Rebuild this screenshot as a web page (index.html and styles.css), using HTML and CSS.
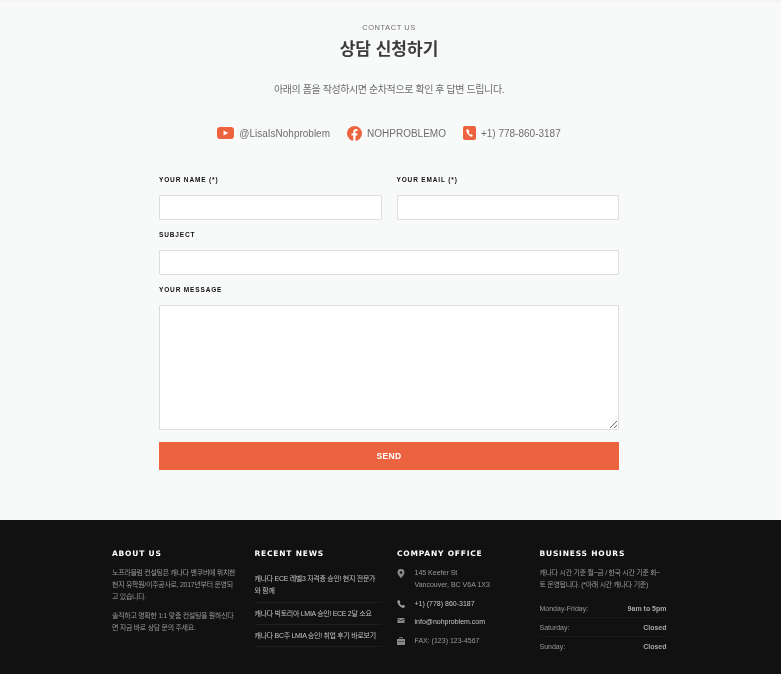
FILE: index.html
```html
<!DOCTYPE html>
<html lang="ko">
<head>
  <meta charset="UTF-8">
  <title>Contact Us</title>
  <link rel="stylesheet" href="styles.css">
</head>
<body>
  <section class="contact">
    <div class="contact-inner">
      <p class="eyebrow">CONTACT US</p>
      <h1>상담 신청하기</h1>
      <p class="intro">아래의 폼을 작성하시면 순차적으로 확인 후 답변 드립니다.</p>

      <div class="channels">
        <div class="channel">
          <svg width="17" height="12" viewBox="0 0 16 12" preserveAspectRatio="none"><rect width="16" height="12" rx="3" fill="#ec643f"/><path d="M6.2 3.5v5L10.6 6z" fill="#fff"/></svg>
          <span>@LisaIsNohproblem</span>
        </div>
        <div class="channel">
          <svg width="15" height="15" viewBox="0 0 15 15"><circle cx="7.5" cy="7.5" r="7.5" fill="#ec643f"/><path d="M6.3 15V9.6H4.5V7.5h1.8V5.9c0-1.8 1.1-2.8 2.7-2.8.8 0 1.5.1 1.5.1v1.8h-.9c-.9 0-1.1.5-1.1 1.1v1.4h2l-.3 2.1H8.500V15z" fill="#fff"/></svg>
          <span>NOHPROBLEMO</span>
        </div>
        <div class="channel">
          <svg width="13" height="14" viewBox="0 0 13 14"><rect width="13" height="14" rx="2" fill="#ec643f"/><path d="M4.700 3.200l-1.300.4c-.3 1.200.2 2.900 1.300 4.300s2.500 2.500 3.900 2.800l1.100-.9c.2-.2.2-.4 0-.6L8.400 8.200c-.2-.1-.4-.1-.5.1l-.5.5c-.7-.3-1.500-1.300-1.800-2.100l.6-.4c.2-.1.200-.3.200-.5l-1.100-2.400c-.1-.2-.4-.3-.6-.2z" fill="#fff"/></svg>
          <span>+1) 778-860-3187</span>
        </div>
      </div>

      <form class="contact-form">
        <div class="form-row">
          <div class="form-group">
            <label for="name">YOUR NAME (*)</label>
            <input type="text" id="name">
          </div>
          <div class="form-group">
            <label for="email">YOUR EMAIL (*)</label>
            <input type="text" id="email">
          </div>
        </div>
        <div class="form-group">
          <label for="subject">SUBJECT</label>
          <input type="text" id="subject">
        </div>
        <div class="form-group">
          <label for="message">YOUR MESSAGE</label>
          <textarea id="message"></textarea>
        </div>
        <button type="button">SEND</button>
      </form>
    </div>
  </section>

  <footer class="footer">
    <div class="footer-inner">
      <div class="col">
        <h4>ABOUT US</h4>
        <p class="about">노프라블럼 컨설팅은 캐나다 밴쿠버에 위치한 현지 유학원/이주공사로, 2017년부터 운영되고 있습니다.</p>
        <p class="about">솔직하고 명확한 1:1 맞춤 컨설팅을 원하신다면 지금 바로 상담 문의 주세요.</p>
      </div>
      <div class="col">
        <h4>RECENT NEWS</h4>
        <ul class="news">
          <li>캐나다 ECE 레벨3 자격증 승인! 현지 전문가와 함께</li>
          <li>캐나다 빅토리아 LMIA 승인! ECE 2달 소요</li>
          <li>캐나다 BC주 LMIA 승인! 취업 후기 바로보기</li>
        </ul>
      </div>
      <div class="col">
        <h4>COMPANY OFFICE</h4>
        <ul class="office">
          <li>
            <svg width="7" height="9" viewBox="0 0 7 9"><path fill-rule="evenodd" d="M3.500 0A3.400 3.400 0 0 0 0 3.400C0 5.500 3.500 9 3.500 9S7 5.500 7 3.400A3.400 3.400 0 0 0 3.500 0zm0 2.200a1.300 1.300 0 1 1 0 2.600 1.300 1.300 0 0 1 0-2.600z" fill="#8a8a8a"/></svg>
            <span>145 Keefer St<br>Vancouver, BC V6A 1X3</span>
          </li>
          <li>
            <svg width="8" height="8" viewBox="0 0 8 8"><path d="M1.800.2L.4.800C.1 2.400 1 4.300 2.300 5.700S5.600 8 7.200 7.700l.7-1.400c.1-.2 0-.4-.1-.5L6.200 4.900c-.2-.1-.4 0-.5.100l-.6.700C4.200 5.300 2.900 4 2.500 3l.7-.6c.2-.1.200-.3.100-.5L2.300.3C2.200.1 2 .1 1.800.200z" fill="#a0a0a0"/></svg>
            <span class="bright">+1) (778) 860-3187</span>
          </li>
          <li>
            <svg width="7" height="5" viewBox="0 0 7 5"><rect width="7" height="5" rx=".6" fill="#8a8a8a"/><path d="M.4.900l3.100 2 3.100-2" fill="none" stroke="#111" stroke-width=".7"/></svg>
            <span class="bright">info@nohproblem.com</span>
          </li>
          <li>
            <svg width="8" height="8" viewBox="0 0 8 8"><path fill-rule="evenodd" d="M2.500 0h3v2H8v6H0V2h2.500zm.6.700v1.300h1.800V.700zM1 4v.6h6V4z" fill="#8a8a8a"/></svg>
            <span>FAX: (123) 123-4567</span>
          </li>
        </ul>
      </div>
      <div class="col">
        <h4>BUSINESS HOURS</h4>
        <p class="about">캐나다 시간 기준 월~금 / 한국 시간 기준 화~토 운영됩니다. (*아래 시간 캐나다 기준)</p>
        <ul class="hours">
          <li><span>Monday-Friday:</span><strong>9am to 5pm</strong></li>
          <li><span>Saturday:</span><strong>Closed</strong></li>
          <li><span>Sunday:</span><strong>Closed</strong></li>
        </ul>
      </div>
    </div>
  </footer>
</body>
</html>
```

FILE: styles.css
```css
* {
  box-sizing: border-box;
}
body {
  margin: 0;
  height: 674px;
  overflow: hidden;
  font-family: "Liberation Sans", "Noto Sans CJK KR", sans-serif;
  background-color: #f8f9f9;
}
p, h1, h4, ul {
  margin: 0;
  padding: 0;
}
ul {
  list-style: none;
}

.contact {
  height: 520px;
  padding: 23px 3px 0 0;
  text-align: center;
  background: linear-gradient(#f1f1f1, #f8f9f9 3px);
}
.contact-inner, .footer-inner {
  will-change: transform;
}
.eyebrow {
  font-size: 7.500px;
  line-height: 10px;
  letter-spacing: .55px;
  color: #6e6e6e;
}
h1 {
  margin-top: 5px;
  font-size: 17px;
  line-height: 24px;
  font-weight: bold;
  color: #3c3c3c;
}
.intro {
  margin-top: 20px;
  font-size: 10px;
  line-height: 16px;
  letter-spacing: -.4px;
  color: #6e6e6e;
}
.channels {
  display: flex;
  justify-content: center;
  align-items: center;
  gap: 17px;
  margin-top: 27px;
  height: 16px;
  font-size: 10px;
  color: #6e6e6e;
}
.channel {
  display: flex;
  align-items: center;
  gap: 5px;
}

.contact-form {
  width: 460px;
  margin: 34px auto 0;
  text-align: left;
}
.form-row {
  display: flex;
  gap: 15px;
}
.form-row .form-group {
  flex: 1;
}
label {
  display: block;
  height: 10px;
  margin-bottom: 10px;
  font-size: 6.500px;
  line-height: 10px;
  font-weight: bold;
  letter-spacing: .85px;
  color: #111;
}
input, textarea {
  display: block;
  width: 100%;
  border: 1px solid #ddd;
  border-radius: 1px;
  background-color: #fff;
  outline: none;
}
input {
  height: 25px;
  margin-bottom: 10px;
}
textarea {
  height: 125px;
  margin-bottom: 12px;
  resize: vertical;
}
button {
  display: block;
  width: 100%;
  height: 28px;
  padding: 0;
  border: none;
  background-color: #ec643f;
  color: #fff;
  font-family: inherit;
  font-size: 8.500px;
  font-weight: bold;
  letter-spacing: .3px;
}

.footer {
  height: 154px;
  padding: 29px 3px 0 0;
  background-color: #111;
  color: #999;
  font-size: 7px;
}
.footer-inner {
  display: grid;
  grid-template-columns: repeat(4, 127px);
  gap: 15.500px;
  width: 554px;
  margin: 0 auto;
}
h4 {
  height: 10px;
  margin-bottom: 8px;
  font-family: "DejaVu Sans", sans-serif;
  font-size: 7.500px;
  line-height: 10px;
  font-weight: bold;
  letter-spacing: .8px;
  color: #fff;
}
.about {
  width: 124px;
  line-height: 12px;
  margin-bottom: 7px;
  letter-spacing: -.3px;
}
.news {
  margin-top: 14px;
  color: #c4c4c4;
  letter-spacing: -.3px;
}
.news li {
  padding: 5px 4px 4px 0;
  line-height: 12px;
  border-bottom: 1px solid #1e1e1e;
}
.news li:first-child {
  padding-top: 0;
  padding-bottom: 5px;
}
.office li {
  display: flex;
  gap: 9.500px;
  margin-bottom: 6.500px;
  line-height: 12px;
}
.office svg {
  flex: none;
  width: 8px;
  margin-top: 2px;
}
.bright {
  color: #c8c8c8;
}
.hours {
  margin-top: 8px;
}
.hours li {
  display: flex;
  justify-content: space-between;
  padding: 4px 0 3px;
  line-height: 11px;
  border-bottom: 1px solid #1a1a1a;
}
.hours li:last-child {
  border-bottom: none;
}
.hours strong {
  color: #a8a8a8;
}
```
